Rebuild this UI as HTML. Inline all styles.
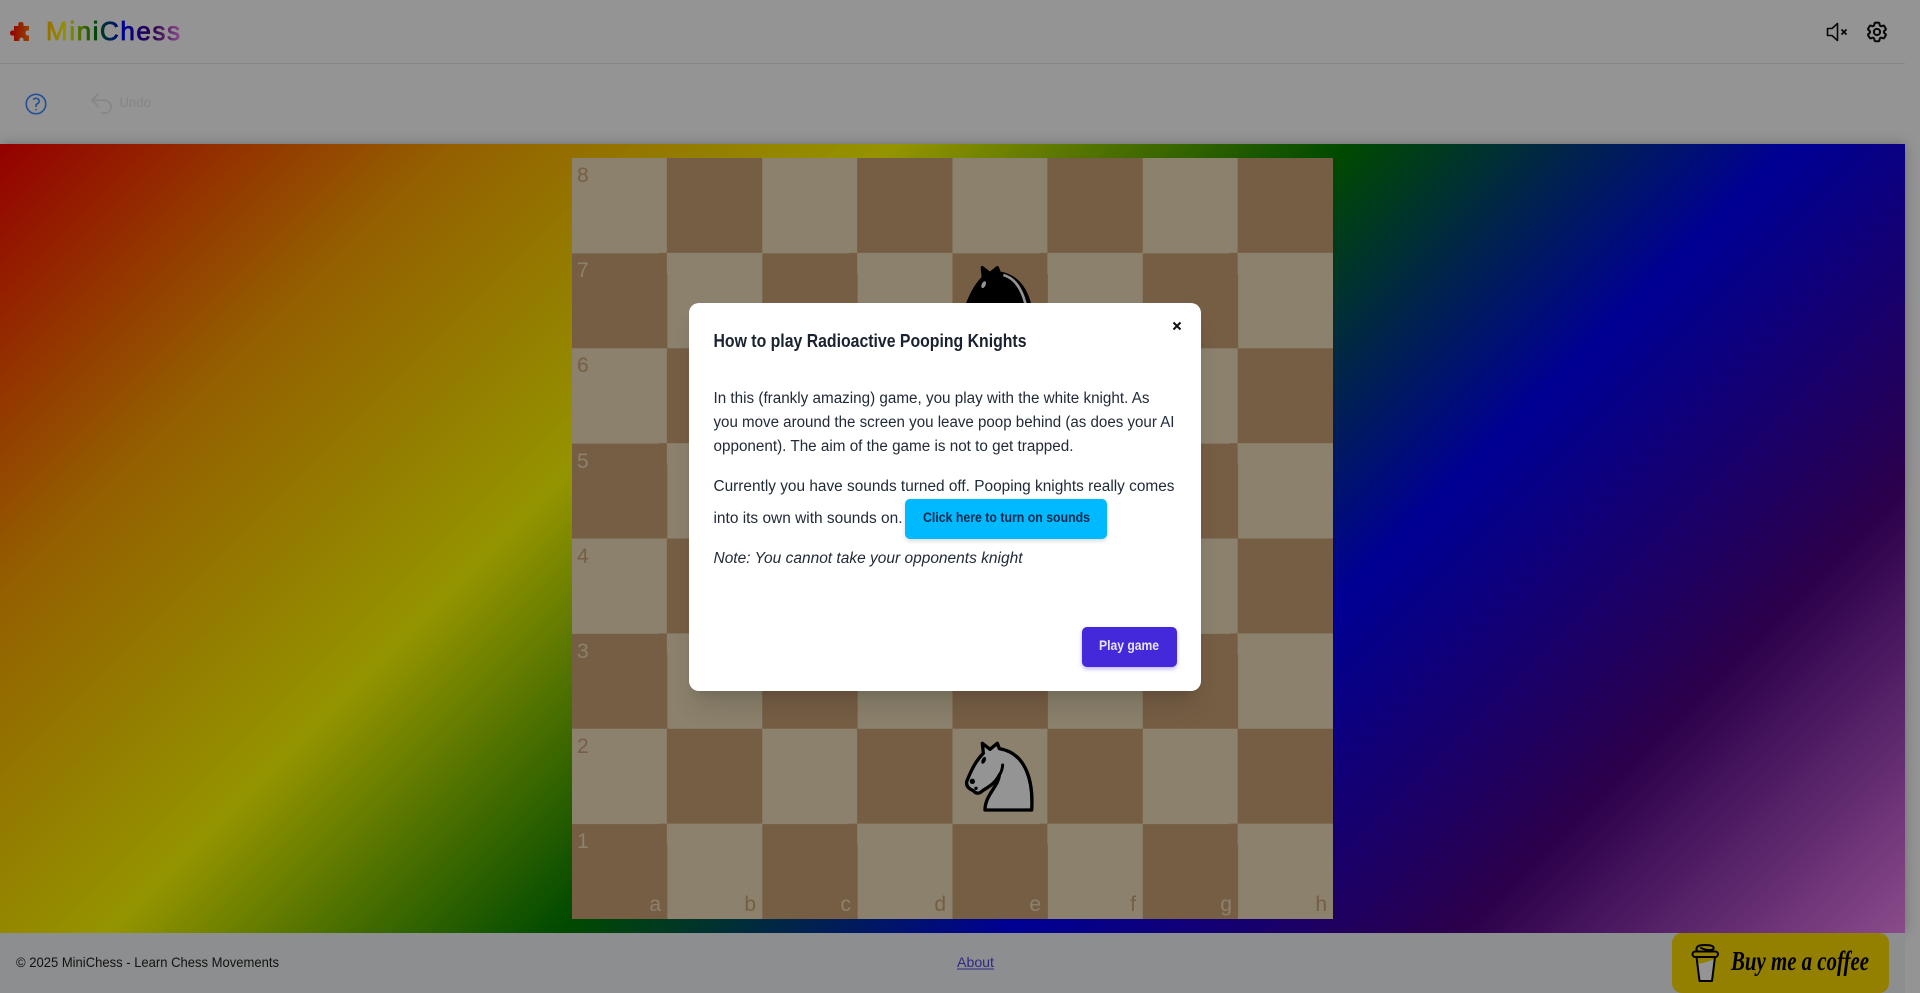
<!DOCTYPE html>
<html lang="en"><head><meta charset="utf-8"><title>MiniChess</title>
<style>
html,body{margin:0;padding:0;width:1920px;height:993px;overflow:hidden;background:#fff;font-family:"Liberation Sans",sans-serif}
.abs{position:absolute}
#hdr{left:0;top:0;width:1905px;height:144px;background:#fff}
#hline{left:0;top:63px;width:1905px;height:1px;background:#e5e7eb}
#main{left:0;top:144px;width:1905px;height:789px;background:linear-gradient(135deg,red,orange,yellow,green,blue,indigo,violet);box-shadow:0 0 12px rgba(0,0,0,.25)}
#board{left:572px;top:158px;width:761px;height:761px;background:repeating-conic-gradient(#cba378 0 25%,#f0debb 0 50%) 0 0/190.25px 190.25px}
#foot{left:0;top:933px;width:1905px;height:60px;background:#f3f4f6}
#bmc{left:1672px;top:933px;width:217px;height:60px;background:#fd0;border-radius:10px}
#ov{left:0;top:0;width:1920px;height:993px;background:rgba(0,0,0,.42)}
#modal{left:689px;top:303px;width:512px;height:388px;background:#fff;border-radius:10px;box-shadow:0 20px 25px -5px rgba(0,0,0,.12),0 8px 10px -6px rgba(0,0,0,.1)}
#b1{left:905px;top:499px;width:202px;height:40px;background:#00b9ff;border-radius:5px;box-shadow:0 2px 4px rgba(0,0,0,.15)}
#b2{left:1082px;top:627px;width:95px;height:40px;background:#4329d9;border-radius:5px;box-shadow:0 2px 4px rgba(67,41,217,.35)}
svg{position:absolute;left:0;top:0;overflow:visible}
</style></head><body>
<div class="abs" id="hdr"></div>
<div class="abs" id="hline"></div>
<div class="abs" id="main"></div>
<div class="abs" id="board"></div>
<div class="abs" id="foot"></div>
<div class="abs" id="bmc"></div>

<svg width="1920" height="993" viewBox="0 0 1920 993" xmlns="http://www.w3.org/2000/svg">
<defs>
<linearGradient id="lg" gradientUnits="userSpaceOnUse" x1="10" y1="0" x2="180" y2="0">
<stop offset="0" stop-color="#f00"/><stop offset=".1667" stop-color="#ffa500"/><stop offset=".3333" stop-color="#ff0"/><stop offset=".5" stop-color="#008000"/><stop offset=".6667" stop-color="#00f"/><stop offset=".8333" stop-color="#4b0082"/><stop offset="1" stop-color="#ee82ee"/>
</linearGradient>
</defs>
<!-- logo -->
<path fill="url(#lg)" d="M14 26H18.5C18 24.5 17.8 22 21 22C24 22 23.8 24.5 23.5 26H29V30.5C27 30 25.5 31 25.5 33C25.5 35 27 36 29 35.5V41H23.5C24 39 23 37.5 21.5 37.5C20 37.5 19 39 19.5 41H14V35.5C12.5 36 10 35.5 10 33C10 30.5 12.5 30 14 30.5Z"/>
<text x="46" y="40" font-size="26" font-weight="400" fill="url(#lg)" stroke="url(#lg)" stroke-width=".8" textLength="134" lengthAdjust="spacing" font-family="Liberation Sans, sans-serif">MiniChess</text>

<!-- header right icons -->
<g fill="none" stroke="#111" stroke-width="1.6" stroke-linecap="round" stroke-linejoin="round">
<path d="M1837.5 23.5V40.5L1832 35.5H1827.5V28.5H1832Z"/>
<path d="M1842 30L1846 34M1846 30L1842 34" stroke-width="1.8"/>
</g>
<g transform="translate(1864.6 19.6) scale(1.03)" fill="none" stroke="#111" stroke-width="2" stroke-linecap="round" stroke-linejoin="round">
<path d="M9.594 3.94c.09-.542.56-.94 1.11-.94h2.593c.55 0 1.02.398 1.11.94l.213 1.281c.063.374.313.686.645.87.074.04.147.083.22.127.325.196.72.257 1.075.124l1.217-.456a1.125 1.125 0 0 1 1.37.49l1.296 2.247a1.125 1.125 0 0 1-.26 1.431l-1.003.827c-.293.241-.438.613-.43.992a7.723 7.723 0 0 1 0 .255c-.008.378.137.75.43.991l1.004.827c.424.35.534.955.26 1.43l-1.298 2.247a1.125 1.125 0 0 1-1.369.491l-1.217-.456c-.355-.133-.75-.072-1.076.124a6.47 6.47 0 0 1-.22.128c-.331.183-.581.495-.644.869l-.213 1.281c-.09.543-.56.94-1.11.94h-2.594c-.55 0-1.019-.398-1.11-.94l-.213-1.281c-.062-.374-.312-.686-.644-.87a6.52 6.52 0 0 1-.22-.127c-.325-.196-.72-.257-1.076-.124l-1.217.456a1.125 1.125 0 0 1-1.369-.49l-1.297-2.247a1.125 1.125 0 0 1 .26-1.431l1.004-.827c.292-.24.437-.613.43-.991a6.932 6.932 0 0 1 0-.255c.007-.38-.138-.751-.43-.992l-1.004-.827a1.125 1.125 0 0 1-.26-1.43l1.297-2.247a1.125 1.125 0 0 1 1.37-.491l1.216.456c.356.133.751.072 1.076-.124.072-.044.146-.086.22-.128.332-.183.582-.495.644-.869l.214-1.28Z"/>
<path d="M15 12a3 3 0 1 1-6 0 3 3 0 0 1 6 0Z"/>
</g>

<!-- toolbar -->
<g transform="translate(23 91) scale(1.083)" fill="none" stroke="#3b8bff" stroke-width="1.5" stroke-linecap="round" stroke-linejoin="round">
<path d="M9.879 7.519c1.171-1.025 3.071-1.025 4.242 0 1.172 1.025 1.172 2.687 0 3.712-.203.179-.43.326-.67.442-.745.361-1.45.999-1.45 1.827v.75M21 12a9 9 0 1 1-18 0 9 9 0 0 1 18 0Zm-9 5.25h.008v.008H12v-.008Z"/>
</g>
<g transform="translate(88.8 90.8) scale(1.06)" fill="none" stroke="#e6e6e6" stroke-width="1.5" stroke-linecap="round" stroke-linejoin="round">
<path d="M9 15 3 9m0 0 6-6M3 9h12a6 6 0 0 1 0 12h-3"/>
</g>
<text x="119.5" y="107" font-size="14" fill="#e6e6e6" textLength="31.5" lengthAdjust="spacingAndGlyphs">Undo</text>

<!-- board labels -->
<g font-size="21" font-family="Liberation Sans, sans-serif">
<text x="577" y="182" fill="#cba378">8</text>
<text x="577" y="277" fill="#f0debb">7</text>
<text x="577" y="372" fill="#cba378">6</text>
<text x="577" y="468" fill="#f0debb">5</text>
<text x="577" y="563" fill="#cba378">4</text>
<text x="577" y="658" fill="#f0debb">3</text>
<text x="577" y="753" fill="#cba378">2</text>
<text x="577" y="848" fill="#f0debb">1</text>
<g text-anchor="end">
<text x="661" y="911" fill="#f0debb">a</text>
<text x="756" y="911" fill="#cba378">b</text>
<text x="851" y="911" fill="#f0debb">c</text>
<text x="946" y="911" fill="#cba378">d</text>
<text x="1041" y="911" fill="#f0debb">e</text>
<text x="1136" y="911" fill="#cba378">f</text>
<text x="1232" y="911" fill="#f0debb">g</text>
<text x="1327" y="911" fill="#cba378">h</text>
</g>
</g>

<!-- black knight -->
<g transform="translate(940 244.35) scale(.3333)" stroke-linecap="round" stroke-linejoin="round">
<path d="M135 270H275C280 190 262 100 178 86L172 70L150 88L127 70L130 100C105 125 92 155 80 185C78 200 90 208 100 212C108 222 118 222 128 212C150 198 165 190 178 165C175 200 135 225 135 270Z" fill="#000" stroke="#000" stroke-width="10"/>
<path d="M190 92C240 105 265 170 267 268" fill="none" stroke="#fff" stroke-width="8" stroke-linecap="butt"/>
<ellipse cx="131" cy="121" rx="6" ry="11" transform="rotate(25 131 121)" fill="#fff"/>
<circle cx="97" cy="184" r="6" fill="#fff"/>
</g>
<!-- white knight -->
<g transform="translate(940 720) scale(.3333)" stroke-linecap="round" stroke-linejoin="round">
<path d="M135 270H275C280 190 262 100 178 86L172 70L150 88L127 70L130 100C105 125 92 155 80 185C78 200 90 208 100 212C108 222 118 222 128 212C150 198 165 190 178 165C175 200 135 225 135 270Z" fill="#fff" stroke="#000" stroke-width="10"/>
<path d="M178 165C183 158 187 148 188 135" fill="none" stroke="#000" stroke-width="9"/>
<ellipse cx="131" cy="121" rx="6" ry="11" transform="rotate(25 131 121)" fill="#000"/>
<circle cx="97" cy="184" r="8" fill="#000"/>
<circle cx="108" cy="205" r="5" fill="#000"/>
</g>

<!-- footer -->
<text x="16" y="967" font-size="14" fill="#222" textLength="263" lengthAdjust="spacingAndGlyphs">© 2025 MiniChess - Learn Chess Movements</text>
<text x="957" y="967" font-size="14" fill="#4f46e5" textLength="37" lengthAdjust="spacingAndGlyphs">About</text>
<rect x="957" y="968.5" width="37" height="1" fill="#4f46e5"/>

<!-- buy me a coffee -->
<g fill="none" stroke="#000" stroke-width="2" stroke-linecap="round" stroke-linejoin="round">
<path d="M1696.5 957L1699.5 981H1712L1715 957Z" fill="#fff" stroke="none"/>
<path d="M1696.5 957L1698.5 963.5C1703 964 1708 961 1714.5 959.5L1715 957Z" fill="#fd0" stroke="none"/>
<path d="M1696.5 957L1699.5 981H1712L1715 957"/>
<rect x="1692.5" y="951.5" width="25.5" height="5.5" rx="2.7"/>
<path d="M1697 951.5C1695 946 1699 945 1705 945C1711 945 1714.5 946 1713.5 949C1711 951 1705 950 1701 948"/>
</g>
<text x="1731" y="970" font-family="Liberation Serif, serif" font-style="italic" font-weight="700" font-size="27" fill="#000" textLength="138" lengthAdjust="spacingAndGlyphs">Buy me a coffee</text>
</svg>

<div class="abs" id="ov"></div>
<div class="abs" id="modal"></div>
<div class="abs" id="b1"></div>
<div class="abs" id="b2"></div>

<svg width="1920" height="993" viewBox="0 0 1920 993" xmlns="http://www.w3.org/2000/svg" font-family="Liberation Sans, sans-serif">
<text x="713.5" y="347" font-size="18" font-weight="700" fill="#1a2230" textLength="313" lengthAdjust="spacingAndGlyphs">How to play Radioactive Pooping Knights</text>
<path d="M1173.5 322.5L1180.5 329.5M1180.5 322.5L1173.5 329.5" stroke="#111" stroke-width="2"/>
<g font-size="15.5" fill="#222b38">
<text x="713.5" y="403" textLength="436" lengthAdjust="spacingAndGlyphs">In this (frankly amazing) game, you play with the white knight. As</text>
<text x="713.5" y="427" textLength="461" lengthAdjust="spacingAndGlyphs">you move around the screen you leave poop behind (as does your AI</text>
<text x="713.5" y="451" textLength="360" lengthAdjust="spacingAndGlyphs">opponent). The aim of the game is not to get trapped.</text>
<text x="713.5" y="491" textLength="461" lengthAdjust="spacingAndGlyphs">Currently you have sounds turned off. Pooping knights really comes</text>
<text x="713.5" y="523" textLength="189" lengthAdjust="spacingAndGlyphs">into its own with sounds on.</text>
<text x="713.5" y="563" font-style="italic" textLength="309" lengthAdjust="spacingAndGlyphs">Note: You cannot take your opponents knight</text>
</g>
<text x="923" y="522" font-size="14" font-weight="700" fill="#0a2a4a" textLength="167" lengthAdjust="spacingAndGlyphs">Click here to turn on sounds</text>
<text x="1099" y="650" font-size="14" font-weight="700" fill="#e8e6ff" textLength="60" lengthAdjust="spacingAndGlyphs">Play game</text>
</svg>
</body></html>
